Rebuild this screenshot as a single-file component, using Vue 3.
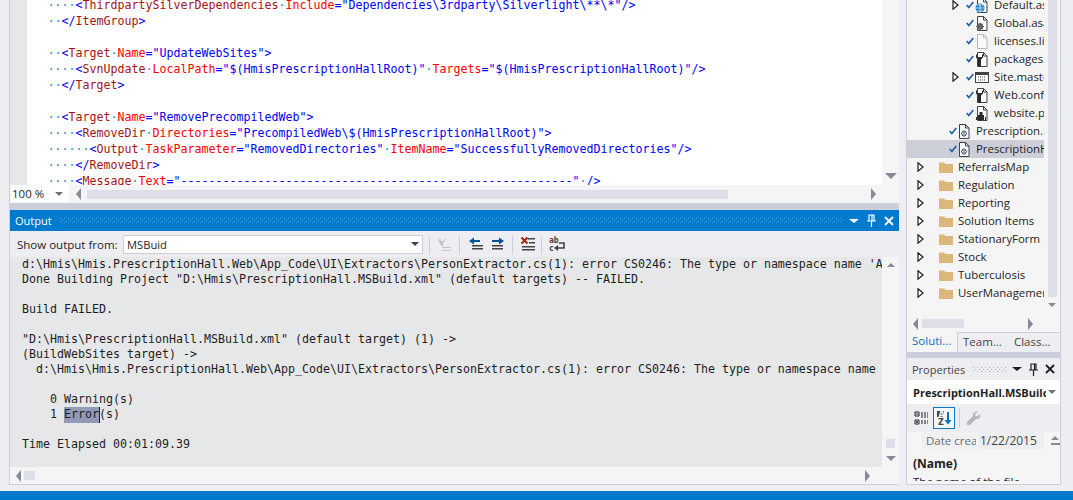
<script setup>
const rawCode = [
  '····<ThirdpartySilverDependencies·Include="Dependencies\\3rdparty\\Silverlight\\**\\*"/>',
  '··</ItemGroup>',
  '',
  '··<Target·Name="UpdateWebSites">',
  '····<SvnUpdate·LocalPath="$(HmisPrescriptionHallRoot)"·Targets="$(HmisPrescriptionHallRoot)"/>',
  '··</Target>',
  '',
  '··<Target·Name="RemovePrecompiledWeb">',
  '····<RemoveDir·Directories="PrecompiledWeb\\$(HmisPrescriptionHallRoot)">',
  '······<Output·TaskParameter="RemovedDirectories"·ItemName="SuccessfullyRemovedDirectories"/>',
  '····</RemoveDir>',
  '····<Message·Text="' + '-'.repeat(56) + '"·/>'
]

function tokenize(line) {
  const out = []
  const re = /(·+)|(<\/?|\/?>|=)|("[^"]*")|([A-Za-z]+)/g
  let prev = ''
  let m
  while ((m = re.exec(line))) {
    if (m[1]) out.push({ c: 'ws', t: m[1] })
    else if (m[2]) { out.push({ c: 'pn', t: m[2] }); prev = m[2] }
    else if (m[3]) out.push({ c: 'pn', t: m[3] })
    else { out.push({ c: prev === '<' || prev === '</' ? 'el' : 'at', t: m[4] }); prev = '' }
  }
  return out
}
const codeLines = rawCode.map(tokenize)

const err = 'd:\\Hmis\\Hmis.PrescriptionHall.Web\\App_Code\\UI\\Extractors\\PersonExtractor.cs(1): error CS0246: The type or namespace name '
const outBefore = [
  err + "'AssemblyName'",
  'Done Building Project "D:\\Hmis\\PrescriptionHall.MSBuild.xml" (default targets) -- FAILED.',
  '',
  'Build FAILED.',
  '',
  '"D:\\Hmis\\PrescriptionHall.MSBuild.xml" (default target) (1) ->',
  '(BuildWebSites target) ->',
  '  ' + err,
  '',
  '    0 Warning(s)'
]
const errPrefix = '    1 '

const tree = [
  { label: 'Default.aspx', level: 2, arrow: true, check: true, icon: 'web' },
  { label: 'Global.asax', level: 2, check: true, icon: 'gear' },
  { label: 'licenses.licx', level: 2, check: true, icon: 'blank' },
  { label: 'packages.config', level: 2, check: true, icon: 'wrench' },
  { label: 'Site.master', level: 2, arrow: true, check: true, icon: 'master' },
  { label: 'Web.config', level: 2, check: true, icon: 'wrench' },
  { label: 'website.publishproj', level: 2, check: true, icon: 'pub' },
  { label: 'Prescription.MSBuild.xml', level: 1, check: true, icon: 'xml' },
  { label: 'PrescriptionHall.MSBuild.xml', level: 1, check: true, icon: 'xml', selected: true },
  { label: 'ReferralsMap', level: 0, arrow: true, icon: 'folder' },
  { label: 'Regulation', level: 0, arrow: true, icon: 'folder' },
  { label: 'Reporting', level: 0, arrow: true, icon: 'folder' },
  { label: 'Solution Items', level: 0, arrow: true, icon: 'folder' },
  { label: 'StationaryForm', level: 0, arrow: true, icon: 'folder' },
  { label: 'Stock', level: 0, arrow: true, icon: 'folder' },
  { label: 'Tuberculosis', level: 0, arrow: true, icon: 'folder' },
  { label: 'UserManagement', level: 0, arrow: true, icon: 'folder' }
]
</script>

<template>
  <div class="ide">
    <div class="main">
      <div class="left">
        <section class="editor">
          <div class="editor-top">
            <div class="margin"></div>
            <div class="code">
              <div v-for="(line, i) in codeLines" :key="i" class="code-line">
                <span v-for="(s, j) in line" :key="j" :class="s.c">{{ s.t }}</span>
              </div>
            </div>
            <div class="vbar vbar-editor"><i class="tri-down"></i></div>
          </div>
          <div class="editor-bottom">
            <div class="zoom-box"><span>100 %</span><i class="tri-down small"></i></div>
            <i class="tri-left left-arrow"></i>
            <div class="hthumb"></div>
            <i class="tri-right right-arrow"></i>
          </div>
        </section>

        <div class="split"></div>

        <section class="output">
          <header class="title active">
            <span class="title-text">Output</span>
            <div class="grip"></div>
            <i class="tri-down white"></i>
            <svg class="pin" width="11" height="13" viewBox="0 0 11 13"><path d="M3 1h5v6H3zM6 1v6M1 7h9M5.500 7v6" fill="none" stroke="#fff" stroke-width="1.200"/></svg>
            <svg class="close" width="10" height="10" viewBox="0 0 10 10"><path d="M1 1l8 8M9 1l-8 8" stroke="#fff" stroke-width="1.800"/></svg>
          </header>
          <div class="out-tools">
            <span class="tools-label">Show output from:</span>
            <div class="combo"><span>MSBuid</span><i class="tri-down small dark"></i></div>
            <span class="sep ml6"></span>
            <svg class="t-icon ml7" width="16" height="16" viewBox="0 0 16 16"><path d="M3 2a3 3 0 0 0 0 5l1 3h2V7a3 3 0 0 0 1-5v3H4z" fill="#c2c3c9"/><path d="M5 11h9v1H5zM5 14h9v1H5z" fill="#c2c3c9"/></svg>
            <span class="sep ml6"></span>
            <svg class="t-icon ml8" width="16" height="16" viewBox="0 0 16 16"><path d="M1 5l5-3.500V4h6v2H6v2.500z" fill="#00539c"/><path d="M4 9h11v1.500H4zM4 12h11v1.500H4z" fill="#424242"/></svg>
            <svg class="t-icon ml5" width="16" height="16" viewBox="0 0 16 16"><path d="M15 5l-5-3.500V4H3v2h7v2.500z" fill="#00539c"/><path d="M3 9h11v1.500H3zM3 12h11v1.500H3z" fill="#424242"/></svg>
            <span class="sep ml7"></span>
            <svg class="t-icon ml7" width="16" height="16" viewBox="0 0 16 16"><path d="M8 2h7v1.500H8zM9 6h6v1.500H9zM2 10h13v1.500H2zM2 13h13v1.500H2z" fill="#424242"/><path d="M1.500 1.500l6 6M7.500 1.500l-6 6" stroke="#a1260d" stroke-width="2"/></svg>
            <span class="sep ml5"></span>
            <svg class="t-icon ml7" width="16" height="16" viewBox="0 0 16 16"><path d="M10 7h5v5H8" fill="none" stroke="#424242" stroke-width="1.600"/><path d="M5 12l4-3v6z" fill="#424242"/><text x="0" y="7" class="ab">ab</text><text x="0" y="15" class="ab">c</text></svg>
          </div>
          <div class="out-mid">
            <div class="out-text">
              <div v-for="(l, i) in outBefore" :key="i" class="out-line">{{ l }}</div>
              <div class="out-line">{{ errPrefix }}<span class="sel">Error</span>(s)</div>
              <div class="out-line"></div>
              <div class="out-line">Time Elapsed 00:01:09.39</div>
            </div>
            <div class="vbar vbar-out">
              <i class="tri-up"></i>
              <div class="vspace"></div>
              <div class="vthumb"></div>
              <i class="tri-down"></i>
            </div>
          </div>
          <div class="out-hbar">
            <i class="tri-left"></i>
            <div class="out-hthumb"></div>
            <i class="tri-right"></i>
          </div>
        </section>
      </div>

      <div class="right">
        <section class="solution">
          <div class="sol-top">
            <div class="tree">
              <div v-for="n in tree" :key="n.label" class="row" :class="['lvl' + n.level, { selected: n.selected }]">
                <span class="r-arrow">
                  <svg v-if="n.arrow" width="7" height="10" viewBox="0 0 7 10"><path d="M1 .8l5 4.200-5 4.200z" fill="#fff" stroke="#1e1e1e" stroke-width="1.200"/></svg>
                </span>
                <span v-if="n.check" class="r-check">
                  <svg width="8" height="8" viewBox="0 0 9 9"><path d="M.8 4.500l2.400 2.800L8.200 1" fill="none" stroke="#1b5fa8" stroke-width="1.800"/></svg>
                </span>
                <span class="r-icon">
                  <svg v-if="n.icon === 'folder'" width="14" height="12" viewBox="0 0 14 12"><path d="M0 1.500h5.500l1 1.500H14v9H0z" fill="#dcb67a"/></svg>
                  <svg v-else width="14" height="15" viewBox="0 0 14 15">
                    <template v-if="n.icon === 'master'">
                      <rect x=".5" y="2.500" width="13" height="10" fill="#fff" stroke="#424242"/>
                      <path d="M1 3h12v2H1z" fill="#424242"/>
                      <path d="M3 7h8M3 10h8" stroke="#424242" stroke-dasharray="1 1"/>
                    </template>
                    <template v-else>
                      <path d="M2.500.5h6l3.500 3.500v10.500H2.500z" fill="#fafafa" :stroke="n.icon === 'blank' ? '#b8b8bc' : '#424242'"/>
                      <path d="M8.500.5V4H12" fill="none" :stroke="n.icon === 'blank' ? '#b8b8bc' : '#424242'"/>
                    </template>
                    <template v-if="n.icon === 'web'">
                      <circle cx="5" cy="10" r="4.500" fill="#1b80c8"/>
                      <path d="M.5 10h9M5 5.500v9M2 7h6M2 13h6" stroke="#fff" stroke-width=".7"/>
                    </template>
                    <template v-if="n.icon === 'gear'">
                      <circle cx="5" cy="10.500" r="3.200" fill="#5f5f63"/>
                      <circle cx="5" cy="10.500" r="1.200" fill="#fafafa"/>
                      <path d="M5 6.500v8M1 10.500h8M2.200 7.700l5.600 5.600M7.800 7.700l-5.600 5.600" stroke="#5f5f63"/>
                    </template>
                    <template v-if="n.icon === 'wrench'">
                      <path d="M1 2.500v3l2 2v7h3v-7l2-2v-3l-1 0v2.500H2V2.500z" fill="#2b2b2e"/>
                    </template>
                    <template v-if="n.icon === 'pub'">
                      <rect x="3" y="9" width="6" height="5" fill="#2b2b2e"/>
                      <path d="M1 11h1v3H1zM10 11h1v3h-1z" fill="#2b2b2e"/>
                      <path d="M4.500 6h3v3h-3z" fill="#2b2b2e"/>
                    </template>
                    <template v-if="n.icon === 'xml'">
                      <path d="M6 7L4.500 9.500 6 12M8 7l1.500 2.500L8 12" fill="none" stroke="#2b2b2e"/>
                      <path d="M7 6v7" stroke="#1b5fa8"/>
                    </template>
                  </svg>
                </span>
                <span class="r-label">{{ n.label }}</span>
              </div>
            </div>
            <div class="sol-vbar">
              <div class="sol-vthumb"></div>
              <i class="tri-down"></i>
            </div>
          </div>
          <div class="sol-hbar">
            <i class="tri-left"></i>
            <div class="sol-hthumb"></div>
            <i class="tri-right"></i>
          </div>
          <div class="tabs">
            <span class="tab on">Soluti...</span>
            <span class="tab-rest">
              <span class="tab">Team...</span>
              <span class="tab">Class...</span>
            </span>
          </div>
        </section>

        <div class="split small-split"></div>

        <section class="props">
          <header class="title">
            <span class="title-text dim">Properties</span>
            <div class="grip grey"></div>
            <i class="tri-down black"></i>
            <svg class="pin" width="9" height="13" viewBox="0 0 9 13"><path d="M2 1h5v6H2zM5.500 1v6M0 7h9M4.500 7v6" fill="none" stroke="#1e1e1e" stroke-width="1.200"/></svg>
            <svg class="close" width="10" height="10" viewBox="0 0 10 10"><path d="M1 1l8 8M9 1l-8 8" stroke="#1e1e1e" stroke-width="1.800"/></svg>
          </header>
          <div class="obj">
            <span class="obj-name"><b>PrescriptionHall.MSBuild.xml</b></span>
            <i class="tri-down small"></i>
          </div>
          <div class="p-tools">
            <svg width="15" height="15" viewBox="0 0 15 15"><path d="M1 1h4v4H1zM1 9h4v4H1z" fill="#fff" stroke="#1e1e1e"/><path d="M2 3h2M2 11h2M3 10v2" stroke="#1e1e1e"/><path d="M7 2h7M7 4h7M7 6h7M7 10h7M7 12h7" stroke="#1e1e1e" stroke-dasharray="2 1"/></svg>
            <span class="az">
              <svg width="17" height="17" viewBox="0 0 17 17"><path d="M1 1h7v6H1z" fill="#424242"/><text x="2.500" y="6.500" class="az-t light">A</text><text x="2" y="15" class="az-t">Z</text><path d="M12 2v11" stroke="#0e70c0" stroke-width="2"/><path d="M8.500 10l3.500 4.500 3.500-4.500z" fill="#0e70c0"/></svg>
            </span>
            <span class="sep"></span>
            <svg class="wrench" width="15" height="15" viewBox="0 0 15 15"><path d="M14 3l-3 2.500L9.500 5 9 3l3-2.500C9 0 6.500 2 7 5L1 11v3h3l6-6c3 .5 5-2 4-5z" fill="#b5b6bb"/></svg>
          </div>
          <div class="grid-row">
            <span class="g-name">Date crea</span>
            <span class="g-val">1/22/2015</span>
            <span class="g-scroll"><i class="tri-up"></i><i class="bar"></i></span>
          </div>
          <div class="desc">
            <div class="d-name">(Name)</div>
            <div class="d-text">The name of the file</div>
          </div>
        </section>
      </div>
    </div>
    <footer class="status"></footer>
  </div>
</template>

<style>
html, body { margin: 0; overflow: hidden; background: #eeeef2; }
</style>

<style scoped>
.ide {
  width: 1073px; height: 500px; display: flex; flex-direction: column;
  background: #eeeef2; overflow: hidden;
  font-family: "Open Sans", "Noto Sans", sans-serif; font-size: 11.500px; color: #1e1e1e;
}
.main { flex: 1; min-height: 0; display: flex; }
.status { height: 9px; background: #007acc; flex: none; }
.left { width: 890px; margin-left: 9px; height: 485px; display: flex; flex-direction: column; }
.right { width: 155px; margin-left: 7px; height: 485px; display: flex; flex-direction: column; }
.split { height: 7px; background: #cccedb; flex: none; }
.small-split { height: 6px; }

i { display: block; flex: none; width: 0; height: 0; }
.tri-down { border-left: 6px solid transparent; border-right: 6px solid transparent; border-top: 6px solid #868999; }
.tri-down.small { border-left-width: 4px; border-right-width: 4px; border-top-width: 4px; border-top-color: #717171; }
.tri-down.dark { border-top-color: #424242; }
.tri-down.white { border-left-width: 5px; border-right-width: 5px; border-top: 4px solid #fff; }
.tri-down.black { border-left-width: 5px; border-right-width: 5px; border-top: 4px solid #1e1e1e; }
.tri-up { border-left: 4px solid transparent; border-right: 4px solid transparent; border-bottom: 4px solid #868999; }
.tri-left { border-top: 6px solid transparent; border-bottom: 6px solid transparent; border-right: 5px solid #868999; }
.tri-right { border-top: 6px solid transparent; border-bottom: 6px solid transparent; border-left: 5px solid #868999; }

/* editor */
.editor { height: 203px; flex: none; display: flex; flex-direction: column; border-left: 1px solid #cccedb; box-sizing: border-box; }
.editor-top { height: 185px; display: flex; overflow: hidden; }
.margin { width: 17px; background: #e6e7e8; flex: none; }
.code {
  width: 855px; flex: none; background: #fff; overflow: hidden; box-sizing: border-box; padding: 0 0 0 20.500px;
  font-family: "DejaVu Sans Mono", monospace; font-size: 11.630px;
}
.code-line { height: 16px; line-height: 16px; white-space: pre; position: relative; top: -3px; }
.ws { color: #2b91af; }
.pn { color: #0000ff; }
.el { color: #a31515; }
.at { color: #ff0000; }
.vbar { width: 17px; flex: none; background: #f5f5f5; display: flex; flex-direction: column; align-items: center; box-sizing: border-box; }
.vbar-editor { justify-content: flex-end; padding-bottom: 6px; }
.editor-bottom { height: 18px; flex: none; display: flex; align-items: center; background: #f5f5f5; }
.zoom-box {
  width: 58px; height: 17px; margin: -1px 0 0 1px; background: #fff; box-sizing: border-box; padding: 0 6px 0 1px;
  display: flex; align-items: center; justify-content: space-between; font-size: 11.500px; color: #1e1e1e;
}
.left-arrow { margin-left: 7px; }
.hthumb { width: 641px; height: 9px; margin-left: 6px; background: #dedee8; }
.right-arrow { margin-left: 143px; }

/* titles */
.title { height: 22px; flex: none; display: flex; align-items: center; box-sizing: border-box; padding: 0 5px 0 5px; color: #444; background: #eeeef2; }
.title.active { height: 21px; background: #007acc; color: #fff; padding-right: 5px; }
.title-text { font-size: 11px; }
.title-text.dim { color: #444; }
.grip {
  flex: 1; height: 5px; margin: 0 5px 0 8px;
  background-image:
    conic-gradient(from 0deg at 1px 1px, transparent 75%, #59a8de 0),
    conic-gradient(from 0deg at 1px 1px, transparent 75%, #59a8de 0);
  background-size: 4px 4px; background-position: 0 0, 2px 2px;
}
.grip.grey {
  margin: 0 6px 0 8px;
  background-image:
    conic-gradient(from 0deg at 1px 1px, transparent 75%, #a9abb8 0),
    conic-gradient(from 0deg at 1px 1px, transparent 75%, #a9abb8 0);
}
.pin { margin-left: 7px; flex: none; }
.close { margin: 0 0 0 7px; flex: none; }

/* output */
.output { flex: 1; min-height: 0; display: flex; flex-direction: column; border: 1px solid #cccedb; border-top: 0; border-right: 0; box-sizing: border-box; border-bottom-width: 1px; }
.out-tools { height: 26px; flex: none; display: flex; align-items: center; padding-left: 7px; box-sizing: border-box; }
.tools-label { width: 106px; flex: none; color: #1e1e1e; }
.combo { width: 300px; height: 19px; flex: none; background: #fff; border: 1px solid #cccedb; box-sizing: border-box; display: flex; align-items: center; justify-content: space-between; padding: 0 3px 0 3px; font-size: 11.200px; }
.sep { width: 1px; height: 19px; background: #cccedb; flex: none; }
.t-icon { flex: none; }
.ml5 { margin-left: 5px; }
.ml6 { margin-left: 6px; }
.ml7 { margin-left: 7px; }
.ml8 { margin-left: 8px; }
.ab { font: bold 8px "DejaVu Sans Mono", monospace; fill: #424242; }
.out-mid { flex: 1; min-height: 0; display: flex; }
.out-text {
  width: 872px; flex: none; box-sizing: border-box; background: #e6e7e8; overflow: hidden; padding: 0 0 0 12px;
  font-family: "DejaVu Sans Mono", monospace; font-size: 11.630px; color: #1e1e1e;
}
.out-line { height: 15px; line-height: 15px; white-space: pre; }
.sel { display: inline-block; height: 16px; line-height: 15px; vertical-align: top; background: #939ab7; box-shadow: 1px 0 0 #1e1e1e; }
.vbar-out { padding: 6px 0 6px; }
.vspace { flex: 1; }
.vthumb { width: 9px; height: 9px; background: #dedee8; margin-bottom: 8px; }
.vbar-out .tri-down { border-left-width: 5px; border-right-width: 5px; border-top-width: 5px; }
.out-hbar { height: 17px; flex: none; display: flex; align-items: center; background: #f5f5f5; padding-left: 6px; }
.out-hthumb { width: 11px; height: 9px; background: #dedee8; margin-left: 3px; }
.out-hbar .tri-right { margin-left: 830px; }

/* solution */
.solution { height: 352px; flex: none; display: flex; flex-direction: column; border-left: 1px solid #cccedb; border-right: 1px solid #cccedb; box-sizing: border-box; background: #f5f5f5; }
.sol-top { height: 315px; flex: none; display: flex; overflow: hidden; }
.tree { width: 137px; flex: none; overflow: hidden; margin-top: -4px; }
.row { height: 18px; display: flex; align-items: center; white-space: nowrap; font-size: 11.400px; overflow: hidden; }
.row.selected { background: #ccced8; }
.r-arrow { width: 7px; height: 10px; flex: none; display: flex; }
.r-check { width: 8px; height: 9px; flex: none; display: flex; margin-left: 2px; }
.r-icon { width: 14px; flex: none; display: flex; justify-content: center; }
.r-label { margin-left: 5px; flex: none; padding-bottom: 2px; }
.lvl0 .r-arrow { margin-left: 10px; }
.lvl0 .r-icon { margin-left: 15px; }
.lvl1 .r-arrow { margin-left: 33px; }
.lvl1 .r-icon { margin-left: 0; }
.lvl2 .r-arrow { margin-left: 45px; margin-right: 5px; }
.lvl2 .r-icon { margin-left: 1px; }
.sol-vbar { width: 17px; flex: none; display: flex; flex-direction: column; align-items: center; }
.sol-vthumb { width: 9px; height: 297px; background: #dedee8; margin-right: 1px; }
.sol-vbar .tri-down { border-left-width: 4px; border-right-width: 4px; border-top-width: 4px; margin: 6px 1px 0 0; }
.sol-hbar { height: 17px; flex: none; display: flex; align-items: center; padding-left: 6px; width: 137px; box-sizing: border-box; }
.sol-hthumb { width: 42px; height: 9px; margin-left: 4px; background: #dedee8; }
.sol-hbar .tri-right { margin-left: 64px; }
.tabs { flex: 1; display: flex; }
.tab { padding: 0 0 0 5px; line-height: 17px; font-size: 11.500px; color: #444; }
.tab.on { width: 50px; box-sizing: border-box; color: #0e70c0; }
.tab-rest { flex: 1; display: flex; gap: 7px; background: #eeeef2; border-top: 1px solid #cccedb; border-left: 1px solid #cccedb; }

/* props */
.props { flex: 1; min-height: 0; display: flex; flex-direction: column; border: 1px solid #cccedb; border-top: 0; box-sizing: border-box; background: #f5f5f5; overflow: hidden; }
.obj { height: 24px; flex: none; background: #fff; display: flex; align-items: center; justify-content: space-between; padding: 0 4px 0 6px; box-sizing: border-box; }
.obj-name { width: 133px; overflow: hidden; white-space: nowrap; font-size: 11px; }
.p-tools { height: 28px; flex: none; background: #eeeef2; display: flex; align-items: center; padding-left: 7px; box-sizing: border-box; }
.az { width: 22px; height: 22px; margin-left: 4px; border: 1px solid #007acc; box-sizing: border-box; background: #f5f5f5; display: flex; align-items: center; justify-content: center; }
.az-t { font: bold 8px "DejaVu Sans", sans-serif; fill: #424242; }
.az-t.light { fill: #fff; }
.p-tools .sep { margin: 0 6px 0 4px; height: 20px; }
.grid-row { height: 17px; flex: none; display: flex; align-items: center; background: #f5f5f5; padding-left: 15px; }
.g-name { width: 54px; background: #f0f0f3; color: #6d6d6d; padding-left: 4px; box-sizing: border-box; line-height: 17px; white-space: nowrap; overflow: hidden; }
.g-val { width: 66px; margin-left: 2px; background: #eeeef2; color: #444; padding-left: 2px; box-sizing: border-box; line-height: 17px; font-size: 12px; }
.g-scroll { flex: 1; height: 17px; display: flex; flex-direction: column; align-items: center; justify-content: center; gap: 3px; padding-left: 6px; }
.bar { width: 9px; height: 2px; background: #868999; }
.desc { flex: 1; min-height: 0; padding: 7px 0 0 6px; overflow: hidden; margin-bottom: 3px; line-height: 16px; }
.d-name { font-weight: 700; font-size: 12px; }
.d-text { margin-top: 2px; color: #1e1e1e; white-space: nowrap; }
</style>
